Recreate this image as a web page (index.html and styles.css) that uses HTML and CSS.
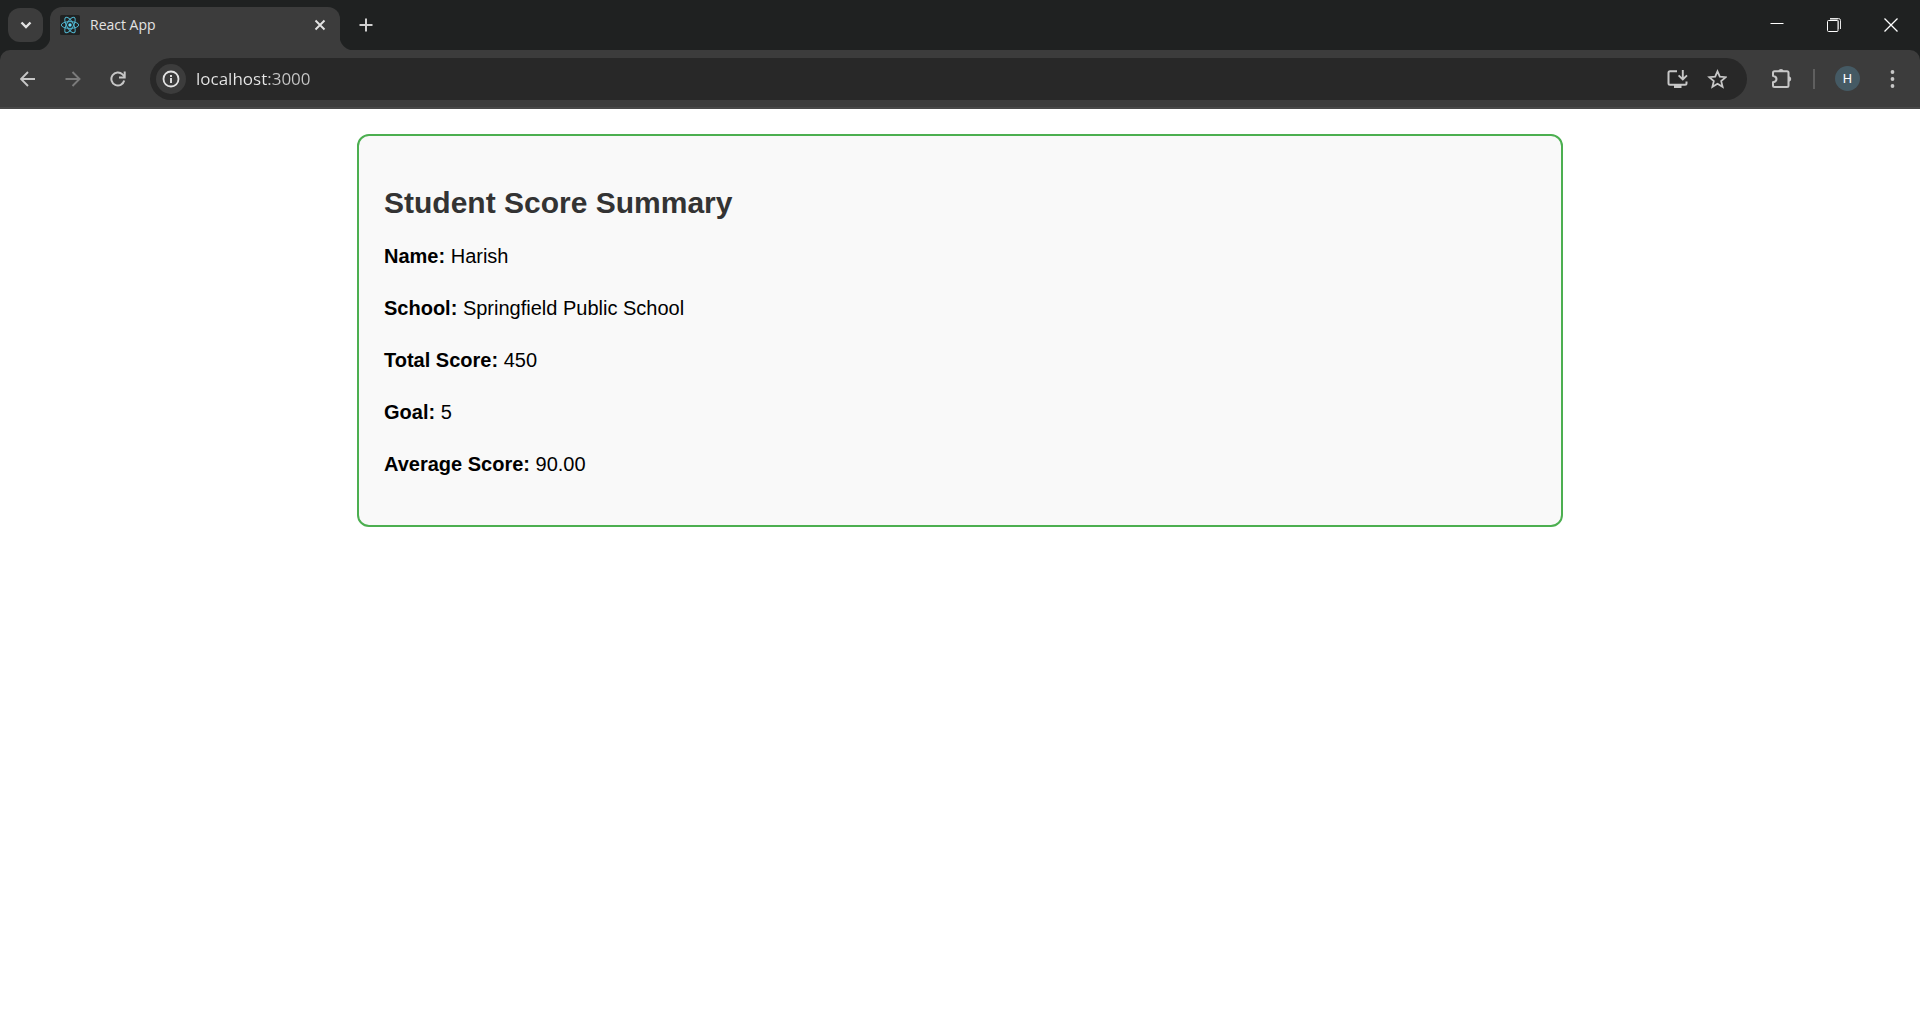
FILE: index.html
```html
<!DOCTYPE html>
<html lang="en">
<head>
<meta charset="utf-8">
<title>React App</title>
<link rel="stylesheet" href="styles.css">
</head>
<body>
<header class="browser">
  <div class="tabstrip">
    <button class="tab-search" aria-label="Search tabs">
      <svg width="12" height="8" viewBox="0 0 12 8"><path d="M1.5 1.5 6 6l4.500-4.500" fill="none" stroke="#e3e3e3" stroke-width="2.400"/></svg>
    </button>
    <div class="tab">
      <svg class="favicon" width="20" height="20" viewBox="0 0 20 20">
        <rect width="20" height="20" rx="1.500" fill="#202222"/>
        <g fill="none" stroke="#4fb3cc" stroke-width="1">
          <ellipse cx="10" cy="10" rx="8.700" ry="3.400"/>
          <ellipse cx="10" cy="10" rx="8.700" ry="3.400" transform="rotate(60 10 10)"/>
          <ellipse cx="10" cy="10" rx="8.700" ry="3.400" transform="rotate(120 10 10)"/>
        </g>
        <circle cx="10" cy="10" r="1.700" fill="#61dafb"/>
      </svg>
      <span class="tab-title">React App</span>
      <button class="tab-close" aria-label="Close tab">
        <svg width="12" height="12" viewBox="0 0 12 12"><path d="M1.500 1.500l9 9M10.500 1.500l-9 9" stroke="#e3e3e3" stroke-width="1.900"/></svg>
      </button>
    </div>
    <button class="new-tab" aria-label="New tab">
      <svg width="14" height="14" viewBox="0 0 14 14"><path d="M7 .5v13M.5 7h13" stroke="#d0d0d0" stroke-width="2"/></svg>
    </button>
    <div class="window-controls">
      <button aria-label="Minimize"><svg width="14" height="14" viewBox="0 0 14 14"><path d="M.5 5.500h13" stroke="#fff"/></svg></button>
      <button aria-label="Restore"><svg width="14" height="14" viewBox="0 0 14 14"><path d="M3 1.500h7.500q1 0 1 1V11" fill="none" stroke="#8c8d8d"/><path d="M3 .5h8.500q2 0 2 2V11" fill="none" stroke="#e6e6e6"/><rect x=".5" y="2.500" width="10.500" height="11" rx="1" fill="#1f2121" stroke="#fff"/></svg></button>
      <button aria-label="Close"><svg width="14" height="14" viewBox="0 0 14 14"><path d="M.5.5l13 13M13.500.5l-13 13" stroke="#fff" stroke-width="1.300"/></svg></button>
    </div>
  </div>
  <div class="toolbar">
    <button class="tool" aria-label="Back"><svg width="16" height="16" viewBox="0 0 16 16"><path d="M15 8H1.500M8 1 1 8l7 7" fill="none" stroke="#c7c7c7" stroke-width="1.900"/></svg></button>
    <button class="tool" aria-label="Forward"><svg width="16" height="16" viewBox="0 0 16 16"><path d="M.5 8H14M7.500 1l7 7-7 7" fill="none" stroke="#7b7b7b" stroke-width="1.900"/></svg></button>
    <button class="tool" aria-label="Reload"><svg width="16" height="16" viewBox="0 0 16 16"><path d="M14.200 9.500A6.500 6.500 0 1 1 12.500 3.400L14.500 5.500" fill="none" stroke="#c7c7c7" stroke-width="2"/><path d="M14.700.5v6H9" fill="none" stroke="#c7c7c7" stroke-width="2"/></svg></button>
    <div class="omnibox">
      <button class="site-info" aria-label="View site information"><svg width="18" height="18" viewBox="0 0 18 18"><circle cx="9" cy="9" r="7.500" fill="none" stroke="#e3e3e3" stroke-width="1.800"/><path d="M9 8v5M9 5v1.900" stroke="#e3e3e3" stroke-width="1.900"/></svg></button>
      <input class="address" type="text" value="localhost:3000" aria-label="Address and search bar">
      <button class="page-action" aria-label="Install app"><svg width="22" height="20" viewBox="0 0 22 20"><path d="M11 2.200H4Q2.500 2.200 2.500 3.700V14.300q0 1.500 1.500 1.500H19q1.500 0 1.500-1.500V12.500" fill="none" stroke="#c7c7c7" stroke-width="2"/><path d="M8 16h7.500v3H8z" fill="#c7c7c7"/><path d="M16.800 1v9M12.600 6.300l4.200 4.200 4.200-4.200" fill="none" stroke="#c7c7c7" stroke-width="1.900"/></svg></button>
      <button class="page-action" aria-label="Bookmark this page"><svg width="20" height="20" viewBox="0 0 20 20"><path d="M10.500 2.300l2.300 5.400 5.900.5-4.500 3.900 1.400 5.700L10.500 14.800l-5.100 3 1.400-5.700L2.300 8.200l5.900-.5z" fill="none" stroke="#c7c7c7" stroke-width="1.800"/></svg></button>
    </div>
    <button class="tool" aria-label="Extensions"><svg width="22" height="22" viewBox="0 0 22 22"><path d="M3.500 3.200H16q1.500 0 1.500 1.500V17.500q0 1.500-1.500 1.500H3.500q-1.500 0-1.500-1.500v-3.200Q5.500 13.500 5.500 11T2 7.700V4.700q0-1.500 1.500-1.500z" fill="none" stroke="#c7c7c7" stroke-width="2"/><path d="M7.300 3a2.800 2.800 0 0 1 5.400 0zM18 8.200a2.800 2.800 0 0 1 0 5.500z" fill="#c7c7c7"/></svg></button>
    <span class="divider"></span>
    <button class="tool" aria-label="Profile"><span class="avatar">H</span></button>
    <button class="tool" aria-label="Menu"><svg width="6" height="18" viewBox="0 0 6 18"><g fill="#c7c7c7"><circle cx="2.500" cy="2" r="1.900"/><circle cx="2.500" cy="9" r="1.900"/><circle cx="2.500" cy="16" r="1.900"/></g></svg></button>
  </div>
</header>
<main class="page">
  <section class="score-card">
    <h2>Student Score Summary</h2>
    <p><b>Name:</b> Harish</p>
    <p><b>School:</b> Springfield Public School</p>
    <p><b>Total Score:</b> 450</p>
    <p><b>Goal:</b> 5</p>
    <p><b>Average Score:</b> 90.00</p>
  </section>
</main>
</body>
</html>
```
FILE: styles.css
```css
* {
  box-sizing: border-box;
}

body {
  margin: 0;
  background: #fff;
  font-family: "Liberation Sans", Arial, sans-serif;
}

button {
  display: flex;
  align-items: center;
  justify-content: center;
  flex: none;
  padding: 0;
  border: 0;
  background: none;
}

.browser {
  background: #1f2121;
  font-family: "Open Sans", "Segoe UI", sans-serif;
}

.tabstrip {
  display: flex;
  height: 50px;
  padding-left: 8px;
}

.tab-search {
  width: 35px;
  height: 34px;
  margin: 8px 7px 0 0;
  border-radius: 12px;
  background: #3c3c3c;
}

.tab {
  position: relative;
  display: flex;
  align-items: center;
  width: 290px;
  margin-top: 7px;
  padding: 0 10px 8px;
  border-radius: 12px 12px 0 0;
  background: #3c3c3c;
}

/* Curved feet that join the tab to the toolbar */
.tab::before,
.tab::after {
  content: "";
  position: absolute;
  bottom: 0;
  width: 14px;
  height: 14px;
}

.tab::before {
  right: 100%;
  background: radial-gradient(circle at 0 0, transparent 14px, #3c3c3c 15px);
}

.tab::after {
  left: 100%;
  background: radial-gradient(circle at 100% 0, transparent 14px, #3c3c3c 15px);
}

.tab-title {
  flex: 1;
  margin-left: 10px;
  color: #e3e3e3;
  font-size: 14px;
  line-height: 20px;
}

.tab-close {
  width: 20px;
  height: 20px;
}

.new-tab {
  width: 34px;
  height: 34px;
  margin: 8px 0 0 9px;
}

.window-controls {
  display: flex;
  margin-left: auto;
  padding-right: 1px;
}

.window-controls button {
  width: 57px;
}

.toolbar {
  display: flex;
  align-items: center;
  height: 59px;
  padding: 0 5px;
  border-bottom: 2px solid #484848;
  border-radius: 10px 10px 0 0;
  background: #3c3c3c;
}

.tool {
  width: 45px;
  height: 42px;
}

.omnibox {
  display: flex;
  align-items: center;
  flex: 1;
  height: 42px;
  margin: 0 12px 0 10px;
  padding: 0 10px 0 6px;
  border-radius: 21px;
  background: #282828;
}

.site-info {
  width: 30px;
  height: 30px;
  border-radius: 50%;
  background: #3c3c3c;
}

.address {
  flex: 1;
  min-width: 0;
  margin-left: 10px;
  padding: 0;
  border: 0;
  outline: 0;
  /* The port is dimmer than the host */
  background: linear-gradient(90deg, #e8e8e8 73px, #c7c7c7 73px);
  background-clip: text;
  color: transparent;
  font: 17px/24px "Open Sans", "Segoe UI", sans-serif;
}

.page-action {
  width: 40px;
  height: 40px;
}

.divider {
  width: 2px;
  height: 20px;
  margin: 0 10px 0 9px;
  background: #5f5f5f;
}

.avatar {
  width: 25px;
  border-radius: 50%;
  background: #455a64;
  color: #fff;
  font: 13px/25px Roboto, sans-serif;
}

.page {
  padding: 25px;
}

.score-card {
  max-width: 1206px;
  margin: 0 auto;
  padding: 25px;
  border: 2px solid #4caf50;
  border-radius: 12px;
  background: #f9f9f9;
  color: #000;
}

.score-card h2 {
  margin: 25px 0 20px;
  color: #333;
  font-size: 30px;
  line-height: 34px;
}

.score-card p {
  margin: 20px 0;
  font-size: 20px;
  line-height: 32px;
}
```
